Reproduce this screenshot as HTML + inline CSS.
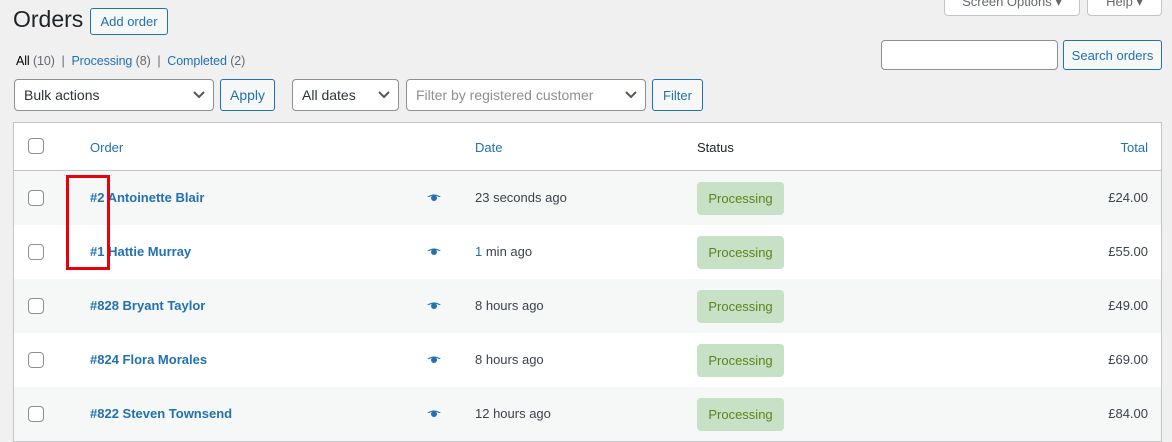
<!DOCTYPE html>
<html><head><style>
*{box-sizing:border-box;margin:0;padding:0}
body{width:1172px;height:434px;background:#f0f0f1;font-family:"Liberation Sans",sans-serif;font-size:13px;color:#3c434a;position:relative;overflow:hidden}
.a{position:absolute}
.btn{position:absolute;border:1px solid #2271b1;color:#2271b1;background:#f6f7f7;border-radius:3px;font-size:13px;display:flex;align-items:center;justify-content:center}
.sel{position:absolute;border:1px solid #8c8f94;background:#fff;border-radius:4px;font-size:14px;color:#2c3338;display:flex;align-items:center;padding-left:9px}
.sel svg{position:absolute;right:8px;top:50%;margin-top:-4px}
.row{position:absolute;left:14px;width:1147px;height:54px}
.cb{position:absolute;left:14px;width:16px;height:16px;border:1px solid #8c8f94;border-radius:4px;background:#fff}
.row .cb{top:19px}
.ord{position:absolute;left:76px;top:19px;color:#2271b1;font-weight:bold;font-size:13px}
.eye{position:absolute;left:412px;top:22px}
.date{position:absolute;left:461px;top:19px;font-size:13px}
.pill{position:absolute;left:683px;top:11px;width:87px;height:33px;background:#c6e1c6;color:#5b841b;border-radius:4px;display:flex;align-items:center;justify-content:center;font-size:13px}
.tot{position:absolute;right:13px;top:19px;font-size:13px}
</style></head><body>
<div class="a" style="left:944px;top:-10px;width:136px;height:26px;border:1px solid #c3c4c7;border-radius:4px;background:#fff;text-align:center;line-height:22px;color:#646970">Screen Options ▾</div>
<div class="a" style="left:1087px;top:-10px;width:75px;height:26px;border:1px solid #c3c4c7;border-radius:4px;background:#fff;text-align:center;line-height:22px;color:#646970">Help ▾</div>
<div class="a" style="left:13px;top:6px;font-size:23px;color:#1d2327">Orders</div>
<div class="btn" style="left:90px;top:8px;width:78px;height:27px">Add order</div>
<div class="a" style="left:16px;top:54px;font-size:12.5px;color:#646970;letter-spacing:-0.1px"><span style="color:#000">All</span> (10) &nbsp;| &nbsp;<span style="color:#2271b1">Processing</span> (8) &nbsp;| &nbsp;<span style="color:#2271b1">Completed</span> (2)</div>
<div class="a" style="left:881px;top:40px;width:177px;height:30px;border:1px solid #8c8f94;border-radius:4px;background:#fff"></div>
<div class="btn" style="left:1063px;top:40px;width:99px;height:30px">Search orders</div>
<div class="sel" style="left:14px;top:79px;width:200px;height:32px">Bulk actions<svg width="12" height="8"><path d="M1 1l5 5 5-5" fill="none" stroke="#50575e" stroke-width="2"/></svg></div>
<div class="btn" style="left:220px;top:79px;width:55px;height:32px;font-size:14px">Apply</div>
<div class="sel" style="left:292px;top:79px;width:107px;height:32px">All dates<svg width="12" height="8"><path d="M1 1l5 5 5-5" fill="none" stroke="#50575e" stroke-width="2"/></svg></div>
<div class="sel" style="left:406px;top:79px;width:240px;height:32px;color:#8c8f94">Filter by registered customer<svg width="12" height="8"><path d="M1 1l5 5 5-5" fill="none" stroke="#50575e" stroke-width="2"/></svg></div>
<div class="btn" style="left:652px;top:79px;width:51px;height:32px">Filter</div>
<div class="a" style="left:13px;top:122px;width:1149px;height:320px;border:1px solid #c3c4c7;background:#fff"></div>
<div class="row" style="top:123px;height:48px;border-bottom:1px solid #c3c4c7">
<div class="cb" style="top:15px"></div>
<div class="a" style="left:76px;top:17px;color:#2271b1;font-size:13px">Order</div>
<div class="a" style="left:461px;top:17px;color:#2271b1">Date</div>
<div class="a" style="left:683px;top:17px;color:#1d2327">Status</div>
<div class="a" style="right:13px;top:17px;color:#2271b1">Total</div>
</div>
<div class="row" style="top:171px;background:#f6f7f7"><div class="cb"></div><div class="ord">#2 Antoinette Blair</div><svg class="eye" width="16" height="10"><path d="M1 4Q8-1 15 4L13 4Q8 1 3 4Z" fill="#2271b1"/><circle cx="8" cy="5" r="3" fill="#2271b1"/></svg><div class="date">23 seconds ago</div><div class="pill">Processing</div><div class="tot">£24.00</div></div>
<div class="row" style="top:225px"><div class="cb"></div><div class="ord">#1 Hattie Murray</div><svg class="eye" width="16" height="10"><path d="M1 4Q8-1 15 4L13 4Q8 1 3 4Z" fill="#2271b1"/><circle cx="8" cy="5" r="3" fill="#2271b1"/></svg><div class="date"><span style="color:#2271b1">1</span> min ago</div><div class="pill">Processing</div><div class="tot">£55.00</div></div>
<div class="row" style="top:279px;background:#f6f7f7"><div class="cb"></div><div class="ord">#828 Bryant Taylor</div><svg class="eye" width="16" height="10"><path d="M1 4Q8-1 15 4L13 4Q8 1 3 4Z" fill="#2271b1"/><circle cx="8" cy="5" r="3" fill="#2271b1"/></svg><div class="date">8 hours ago</div><div class="pill">Processing</div><div class="tot">£49.00</div></div>
<div class="row" style="top:333px"><div class="cb"></div><div class="ord">#824 Flora Morales</div><svg class="eye" width="16" height="10"><path d="M1 4Q8-1 15 4L13 4Q8 1 3 4Z" fill="#2271b1"/><circle cx="8" cy="5" r="3" fill="#2271b1"/></svg><div class="date">8 hours ago</div><div class="pill">Processing</div><div class="tot">£69.00</div></div>
<div class="row" style="top:387px;background:#f6f7f7"><div class="cb"></div><div class="ord">#822 Steven Townsend</div><svg class="eye" width="16" height="10"><path d="M1 4Q8-1 15 4L13 4Q8 1 3 4Z" fill="#2271b1"/><circle cx="8" cy="5" r="3" fill="#2271b1"/></svg><div class="date">12 hours ago</div><div class="pill">Processing</div><div class="tot">£84.00</div></div>
<div class="a" style="left:66px;top:175px;width:44px;height:95px;border:3px solid #e8000b"></div>
</body></html>
